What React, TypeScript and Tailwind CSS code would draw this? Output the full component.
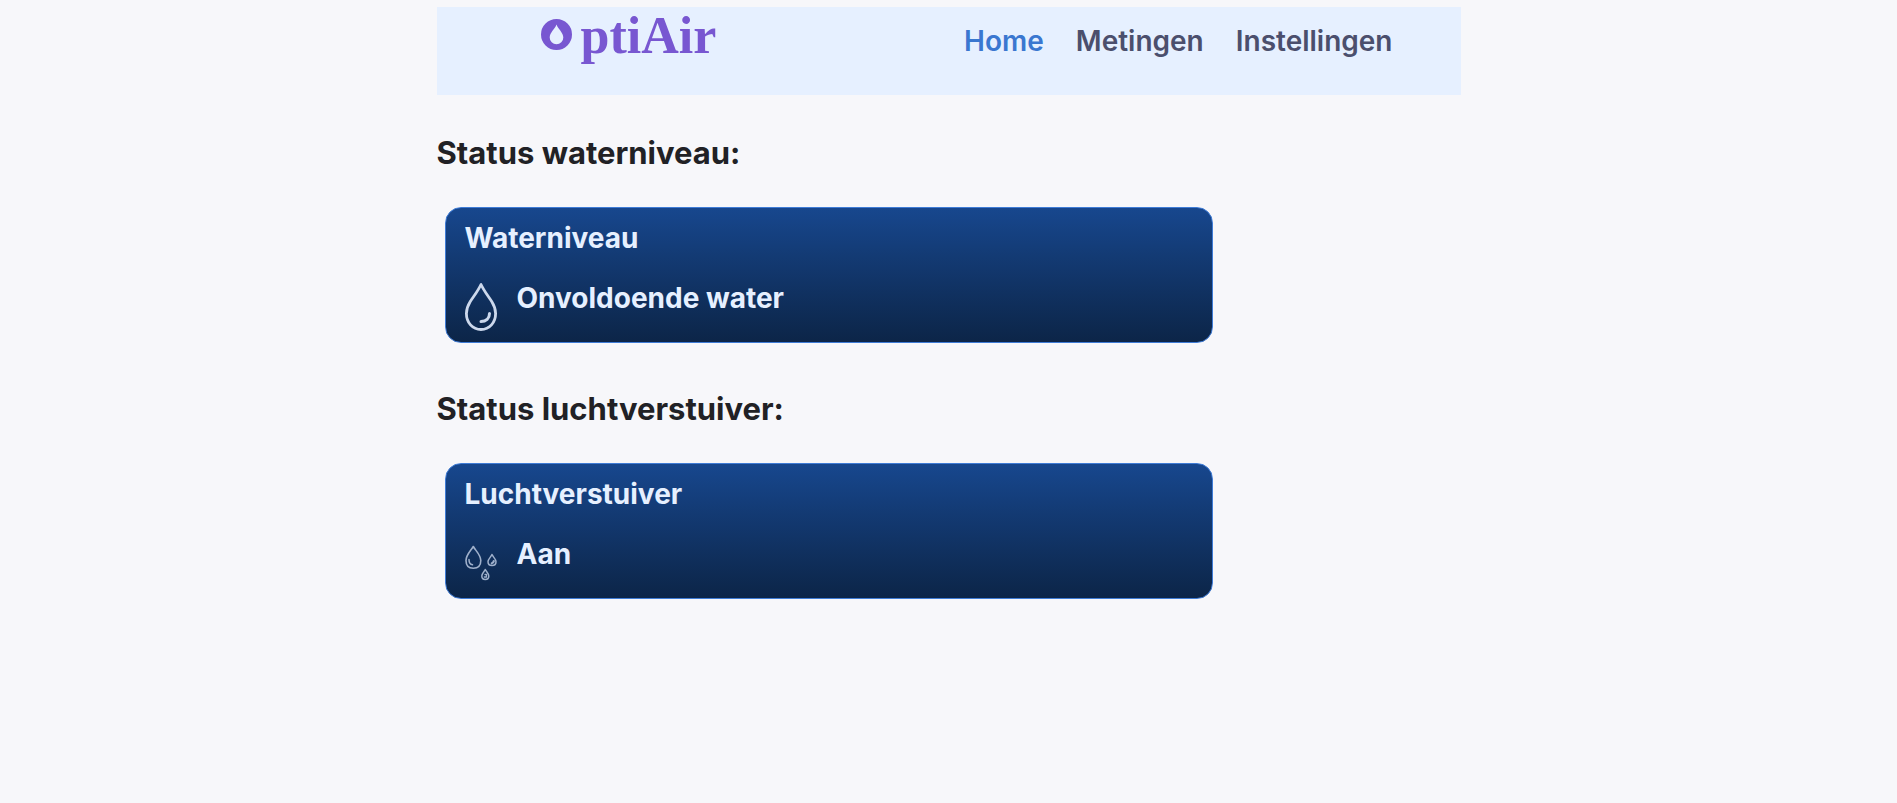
import React from 'react';

interface StatusSectionProps {
  heading: string;
  title: string;
  value: string;
  icon: React.ReactNode;
}

const navItems = [
  { label: 'Home', href: '#home', active: true },
  { label: 'Metingen', href: '#metingen', active: false },
  { label: 'Instellingen', href: '#instellingen', active: false },
];

const Logo = () => (
  <a href="#home" className="flex items-start text-[#7857d1]">
    <svg viewBox="0 0 32 32" className="mt-3 w-8 h-8" aria-hidden="true">
      <path
        fill="currentColor"
        fillRule="evenodd"
        d="M15.500 0a15.500 15.500 0 1 0 0 31a15.500 15.500 0 1 0 0-31ZM15.500 5.500C17 10 22.300 13.500 22.300 18.500a6.800 6.800 0 0 1-13.600 0C8.700 13.500 14 10 15.500 5.500Z"
      />
    </svg>
    <span className="ml-2 font-['Liberation_Serif',serif] text-[52px] leading-[58px] font-bold">
      ptiAir
    </span>
  </a>
);

const DropIcon = () => (
  <svg viewBox="0 0 32 48" className="w-8 h-12" fill="none" stroke="#ccd8ec" strokeLinecap="round" aria-hidden="true">
    <path
      strokeWidth="2.8"
      strokeLinejoin="round"
      d="M16 1.500C13 8 8.500 13.500 5 19C2.500 23 1.400 26.500 1.400 30.500C1.400 39.500 7.500 46.500 16 46.500S30.600 39.500 30.600 30.500C30.600 26.500 29.500 23 27 19C23.500 13.500 19 8 16 1.500Z"
    />
    <path strokeWidth="3" d="M24.500 30.500C24.500 35.500 21 38.500 16 38.500" />
  </svg>
);

const MistIcon = () => (
  <svg viewBox="0 0 32 48" className="w-8 h-12" fill="none" stroke="#9fb0cb" strokeLinejoin="round" strokeLinecap="round" aria-hidden="true">
    <path strokeWidth="1.600" d="M8.300 7.500C6 11.500 1 16 1 21.500C1 26.500 3.500 29.200 8.300 29.200S15.800 26.500 15.800 21.500C15.800 16 10.500 11.500 8.300 7.500Z" />
    <path strokeWidth="1.500" d="M4 20.500C4 24 5.500 25.500 7.500 25.800" />
    <path strokeWidth="1.500" d="M27 15.500C26 18 23 20 23 22.700C23 25 24.700 26.500 27 26.500S31 25 31 22.700C31 20 28 18 27 15.500Z" />
    <path strokeWidth="2.200" d="M28.800 22C28.600 23 28 24 26.800 24.300" />
    <path strokeWidth="1.500" d="M20.300 30.500C19.500 32.500 16.800 34.500 16.800 37C16.800 39.300 18.200 40.500 20.300 40.500S23.800 39.300 23.800 37C23.800 34.500 21.200 32.500 20.300 30.500Z" />
    <path strokeWidth="1.300" d="M19.300 38H21.500V35.500H20" />
  </svg>
);

const StatusSection: React.FC<StatusSectionProps> = ({ heading, title, value, icon }) => (
  <section className="pt-9">
    <h2 className="text-[31px] leading-[44px] font-bold text-[#212125]">{heading}</h2>
    <div className="mt-8 ml-2 mb-2 w-3/4 h-34 px-[19px] pt-3 rounded-2xl border border-[#3f7cd6] bg-linear-to-b from-[#17478e] to-[#0c2548] text-[#e6f0ff] text-[28px] leading-9 font-bold">
      <h3>{title}</h3>
      <div className="mt-6 flex items-start gap-5">
        <div className="mt-[3px]">{icon}</div>
        <p>{value}</p>
      </div>
    </div>
  </section>
);

export default function App() {
  return (
    <div className="min-h-screen bg-[#f7f7fa] pt-[7px] font-['Inter',sans-serif]">
      <div className="mx-auto max-w-5xl">
        <header className="flex h-22 items-start justify-between bg-[#e6f0ff] pl-[104px] pr-17">
          <Logo />
          <nav className="mt-4 flex gap-8 text-[28px] leading-9 font-semibold">
            {navItems.map((item) => (
              <a key={item.label} href={item.href} className={item.active ? 'text-[#3a77d0]' : 'text-[#4b4f6d]'}>
                {item.label}
              </a>
            ))}
          </nav>
        </header>
        <main>
          <StatusSection
            heading="Status waterniveau:"
            title="Waterniveau"
            value="Onvoldoende water"
            icon={<DropIcon />}
          />
          <StatusSection
            heading="Status luchtverstuiver:"
            title="Luchtverstuiver"
            value="Aan"
            icon={<MistIcon />}
          />
        </main>
      </div>
    </div>
  );
}
